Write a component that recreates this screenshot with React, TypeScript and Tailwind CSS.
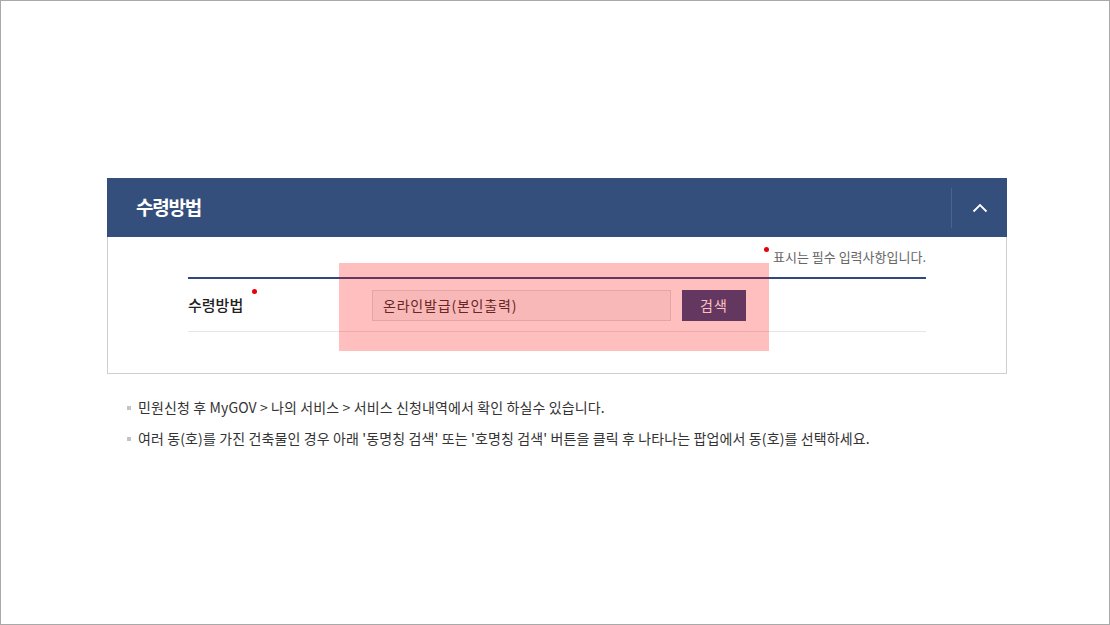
import React from 'react';

const font = { fontFamily: '"Noto Sans CJK KR", "Noto Sans", sans-serif' };

const notes = [
  '민원신청 후 MyGOV > 나의 서비스 > 서비스 신청내역에서 확인 하실수 있습니다.',
  "여러 동(호)를 가진 건축물인 경우 아래 '동명칭 검색' 또는 '호명칭 검색' 버튼을 클릭 후 나타나는 팝업에서 동(호)를 선택하세요.",
];

const App = () => {
  return (
    <div
      className="relative w-[1110px] h-[625px] border border-[#a9a9a9] bg-white overflow-hidden"
      style={font}
    >
      <div className="pt-[177px] pl-[106px] w-[1006px]">
        {/* panel */}
        <div className="w-[900px]">
          <div className="h-[59px] bg-[#344f7c] flex items-center justify-between">
            <h2 className="pl-[29px] text-[19px] font-bold text-white tracking-[-1.2px]">수령방법</h2>
            <div className="flex items-center h-full">
              <div className="w-px h-[40px] bg-[#4b6390]" />
              <button className="w-[55px] h-full flex items-center justify-center">
                <svg width="16" height="10" viewBox="0 0 16 10" fill="none">
                  <path d="M1.5 8.5L8 2l6.5 6.5" stroke="white" strokeWidth="1.8" />
                </svg>
              </button>
            </div>
          </div>

          <div className="border border-t-0 border-[#cfcfcf] px-[80px] pt-[9px] pb-[41px]">
            <p className="flex justify-end text-[13px] text-[#666] leading-[22px] mb-[9px]">
              <span className="relative pl-[6px]">
                <span className="absolute left-[-3px] top-[1px] w-[5px] h-[5px] rounded-full bg-[#e8000b]" />
                표시는 필수 입력사항입니다.
              </span>
            </p>
            <div className="border-t-2 border-[#2f497f]">
              <div className="flex items-center h-[53px] border-b border-[#e6e6e6]">
                <div className="w-[184px] text-[15px] text-[#222] font-medium">
                  <span className="relative">
                    수령방법
                    <span className="absolute right-[-14px] top-[-5px] w-[5px] h-[5px] rounded-full bg-[#e8000b]" />
                  </span>
                </div>
                <div className="flex items-center gap-[11px]">
                  <div className="w-[299px] h-[31px] border border-[#dcdcdc] bg-[#f5f5f5] flex items-center px-[10px] text-[14px] text-[#333] tracking-[0.8px]">
                    온라인발급(본인출력)
                  </div>
                  <button className="w-[64px] h-[31px] bg-[#2f497f] text-white text-[14px] tracking-[1px]">검색</button>
                </div>
              </div>
            </div>
          </div>
        </div>

        {/* notes */}
        <ul className="mt-[23px] pl-[20px] flex flex-col gap-[10px]">
          {notes.map((n) => (
            <li key={n} className="flex items-center text-[14px] text-[#333] leading-[21px] tracking-[0.12px]">
              <span className="w-[4px] h-[4px] bg-[#c4c4c4] mr-[7px]" />
              {n}
            </li>
          ))}
        </ul>
      </div>

      {/* highlight overlay */}
      <div className="absolute left-[338px] top-[262px] w-[430px] h-[88px] bg-[#ff0000]/25 pointer-events-none" />
    </div>
  );
};

export default App;
